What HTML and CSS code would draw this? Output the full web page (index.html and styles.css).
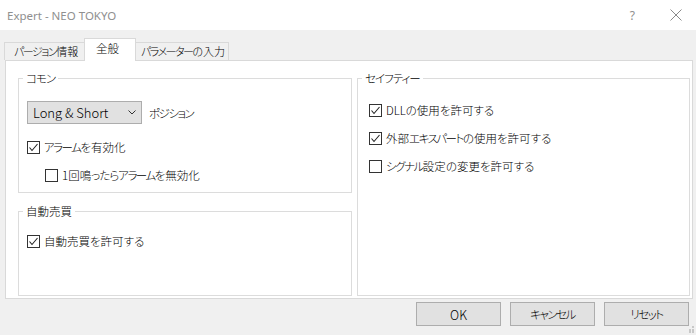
FILE: index.html
```html
<!DOCTYPE html>
<html lang="ja">
<head>
<meta charset="utf-8">
<title>Expert - NEO TOKYO</title>
<link rel="stylesheet" href="styles.css">
</head>
<body>
<div class="titlebar">
  <span class="title">Expert - NEO TOKYO</span>
  <span class="help">?</span>
  <span class="close"><svg width="12" height="12" viewBox="0 0 12 12"><path d="M0.5 0.5L11.5 11.5M11.5 0.5L0.5 11.5" stroke="#8a8a8a" stroke-width="1" fill="none"/></svg></span>
</div>
<div class="tabs">
  <div class="tab tab1"><span class="k">パージョン</span>情報</div>
  <div class="tab tab2 active">全般</div>
  <div class="tab tab3"><span class="k">パラメーター</span>の入力</div>
</div>
<div class="panel">
  <div class="col">
    <fieldset class="group g-common">
      <legend><span class="k1">コモン</span></legend>
      <div class="content c-common">
        <div class="row row-select">
          <div class="select"><span class="latin">Long &amp; Short</span><svg width="8" height="5" viewBox="0 0 8 5"><path d="M0.5 0.5L4 4L7.5 0.5" stroke="#333" fill="none"/></svg></div>
          <span class="select-label k">ポジション</span>
        </div>
        <div class="row row-alarm">
          <span class="cb"><svg width="11" height="11" viewBox="0 0 11 11"><path d="M1.5 5.5L4 8.5L9.5 2" stroke="#222" stroke-width="1.1" fill="none"/></svg></span>
          <span><span class="k">アラーム</span>を有効化</span>
        </div>
        <div class="row row-once">
          <span class="cb"></span>
          <span>1回鳴<span class="k1">ったら</span><span class="k">アラーム</span>を無効化</span>
        </div>
      </div>
    </fieldset>
    <fieldset class="group g-auto">
      <legend>自動売買</legend>
      <div class="content c-auto">
        <div class="row">
          <span class="cb"><svg width="11" height="11" viewBox="0 0 11 11"><path d="M1.5 5.5L4 8.5L9.5 2" stroke="#222" stroke-width="1.1" fill="none"/></svg></span>
          <span>自動売買を許可する</span>
        </div>
      </div>
    </fieldset>
  </div>
  <fieldset class="group g-safety">
    <legend><span class="k1">セイフティー</span></legend>
    <div class="content c-safety">
      <div class="row srow">
        <span class="cb"><svg width="11" height="11" viewBox="0 0 11 11"><path d="M1.5 5.5L4 8.5L9.5 2" stroke="#222" stroke-width="1.1" fill="none"/></svg></span>
        <span>DLLの使用を許可する</span>
      </div>
      <div class="row srow">
        <span class="cb"><svg width="11" height="11" viewBox="0 0 11 11"><path d="M1.5 5.5L4 8.5L9.5 2" stroke="#222" stroke-width="1.1" fill="none"/></svg></span>
        <span>外部<span class="k">エキスパート</span>の使用を許可する</span>
      </div>
      <div class="row srow">
        <span class="cb"></span>
        <span><span class="k">シグナル</span>設定の変更を許可する</span>
      </div>
    </div>
  </fieldset>
</div>
<div class="buttons">
  <button class="btn btn-latin">OK</button>
  <button class="btn"><span class="k">キャンセル</span></button>
  <button class="btn"><span class="k">リセット</span></button>
</div>
<svg class="grip" width="7" height="7" viewBox="0 0 7 7">
  <rect x="5" y="0" width="2" height="2" fill="#c8c8c8"/>
  <rect x="2" y="3" width="2" height="2" fill="#c8c8c8"/>
  <rect x="5" y="3" width="2" height="2" fill="#c8c8c8"/>
  <rect x="2" y="5" width="2" height="2" fill="#c8c8c8"/>
  <rect x="5" y="5" width="2" height="2" fill="#c8c8c8"/>
</svg>
</body>
</html>
```
FILE: styles.css
```css
html, body {
  margin: 0;
  padding: 0;
}
body {
  width: 696px;
  height: 335px;
  overflow: hidden;
  position: relative;
  background: #f0f0f0;
  color: #000;
  font-family: "Noto Sans CJK JP", sans-serif;
  font-size: 11.5px;
  font-weight: 300;
  font-feature-settings: "palt";
}
.k {
  letter-spacing: -1.5px;
}
.k1 {
  letter-spacing: -1px;
}
.latin {
  font-size: 13px;
}
.titlebar {
  height: 30px;
  background: #fff;
  display: flex;
  align-items: center;
  padding-left: 7px;
  box-sizing: border-box;
  color: #8f8f8f;
  font-family: "Noto Sans", sans-serif;
  font-weight: 400;
}
.title {
  flex: 1;
  font-size: 11.5px;
}
.help {
  font-size: 12px;
  margin-right: 35px;
}
.close {
  display: flex;
  margin-right: 14px;
}
.tabs {
  display: flex;
  align-items: flex-end;
  height: 22px;
  margin-top: 8px;
  padding-left: 4px;
  font-size: 11px;
}
.tab {
  height: 18px;
  box-sizing: border-box;
  border: 1px solid #d9d9d9;
  border-bottom: none;
  background: #f0f0f0;
  line-height: 16px;
  white-space: nowrap;
  overflow: hidden;
}
.tab1 {
  width: 80px;
  padding-left: 9px;
  border-right: none;
}
.tab2 {
  width: 52px;
  padding-left: 11px;
}
.tab3 {
  width: 93px;
  padding-left: 5px;
  border-left: none;
}
.tab.active {
  height: 23px;
  background: #fff;
  margin-bottom: -1px;
  position: relative;
  z-index: 1;
  line-height: 18px;
  font-size: 11.5px;
}
.panel {
  margin-left: 5px;
  width: 688px;
  height: 239px;
  box-sizing: border-box;
  border: 1px solid #d9d9d9;
  background: #fff;
  display: flex;
  gap: 5px;
  padding: 10px 2px 2px 12px;
}
.col {
  width: 334px;
  display: flex;
  flex-direction: column;
  gap: 11px;
}
.group {
  margin: 0;
  padding: 0;
  border: 1px solid #dcdcdc;
  box-sizing: border-box;
  min-width: 0;
}
.group legend {
  margin-left: 4px;
  padding: 0 3px;
  line-height: 14px;
}
.g-common {
  height: 122px;
}
.g-auto {
  height: 92px;
}
.g-safety {
  width: 333px;
  height: 225px;
}
.row {
  display: flex;
  align-items: center;
  height: 16px;
  white-space: nowrap;
}
.c-common {
  padding: 16px 0 0 8px;
}
.row-select {
  height: 23px;
}
.row-alarm {
  margin-top: 15px;
}
.row-once {
  margin-top: 12px;
  padding-left: 18px;
}
.c-auto {
  padding: 15px 0 0 8px;
}
.c-safety {
  padding: 11px 0 0 11px;
}
.srow {
  height: 28px;
}
.select {
  width: 115px;
  height: 23px;
  box-sizing: border-box;
  border: 1px solid #adadad;
  background: #e1e1e1;
  display: flex;
  align-items: center;
  justify-content: space-between;
  padding: 0 5px 0 5px;
}
.select-label {
  margin-left: 7px;
}
.cb {
  width: 13px;
  height: 13px;
  box-sizing: border-box;
  border: 1px solid #333;
  background: #fff;
  margin-right: 4px;
  flex: none;
  display: flex;
}
.buttons {
  display: flex;
  justify-content: flex-end;
  gap: 9px;
  padding-right: 7px;
  margin-top: 3px;
}
.btn {
  width: 85px;
  height: 24px;
  box-sizing: border-box;
  border: 1px solid #adadad;
  background: #e1e1e1;
  font: inherit;
  color: #000;
  padding: 0;
  margin: 0;
}
.btn-latin {
  font-size: 12.5px;
}
.grip {
  position: absolute;
  right: 2px;
  bottom: 2px;
}
```
